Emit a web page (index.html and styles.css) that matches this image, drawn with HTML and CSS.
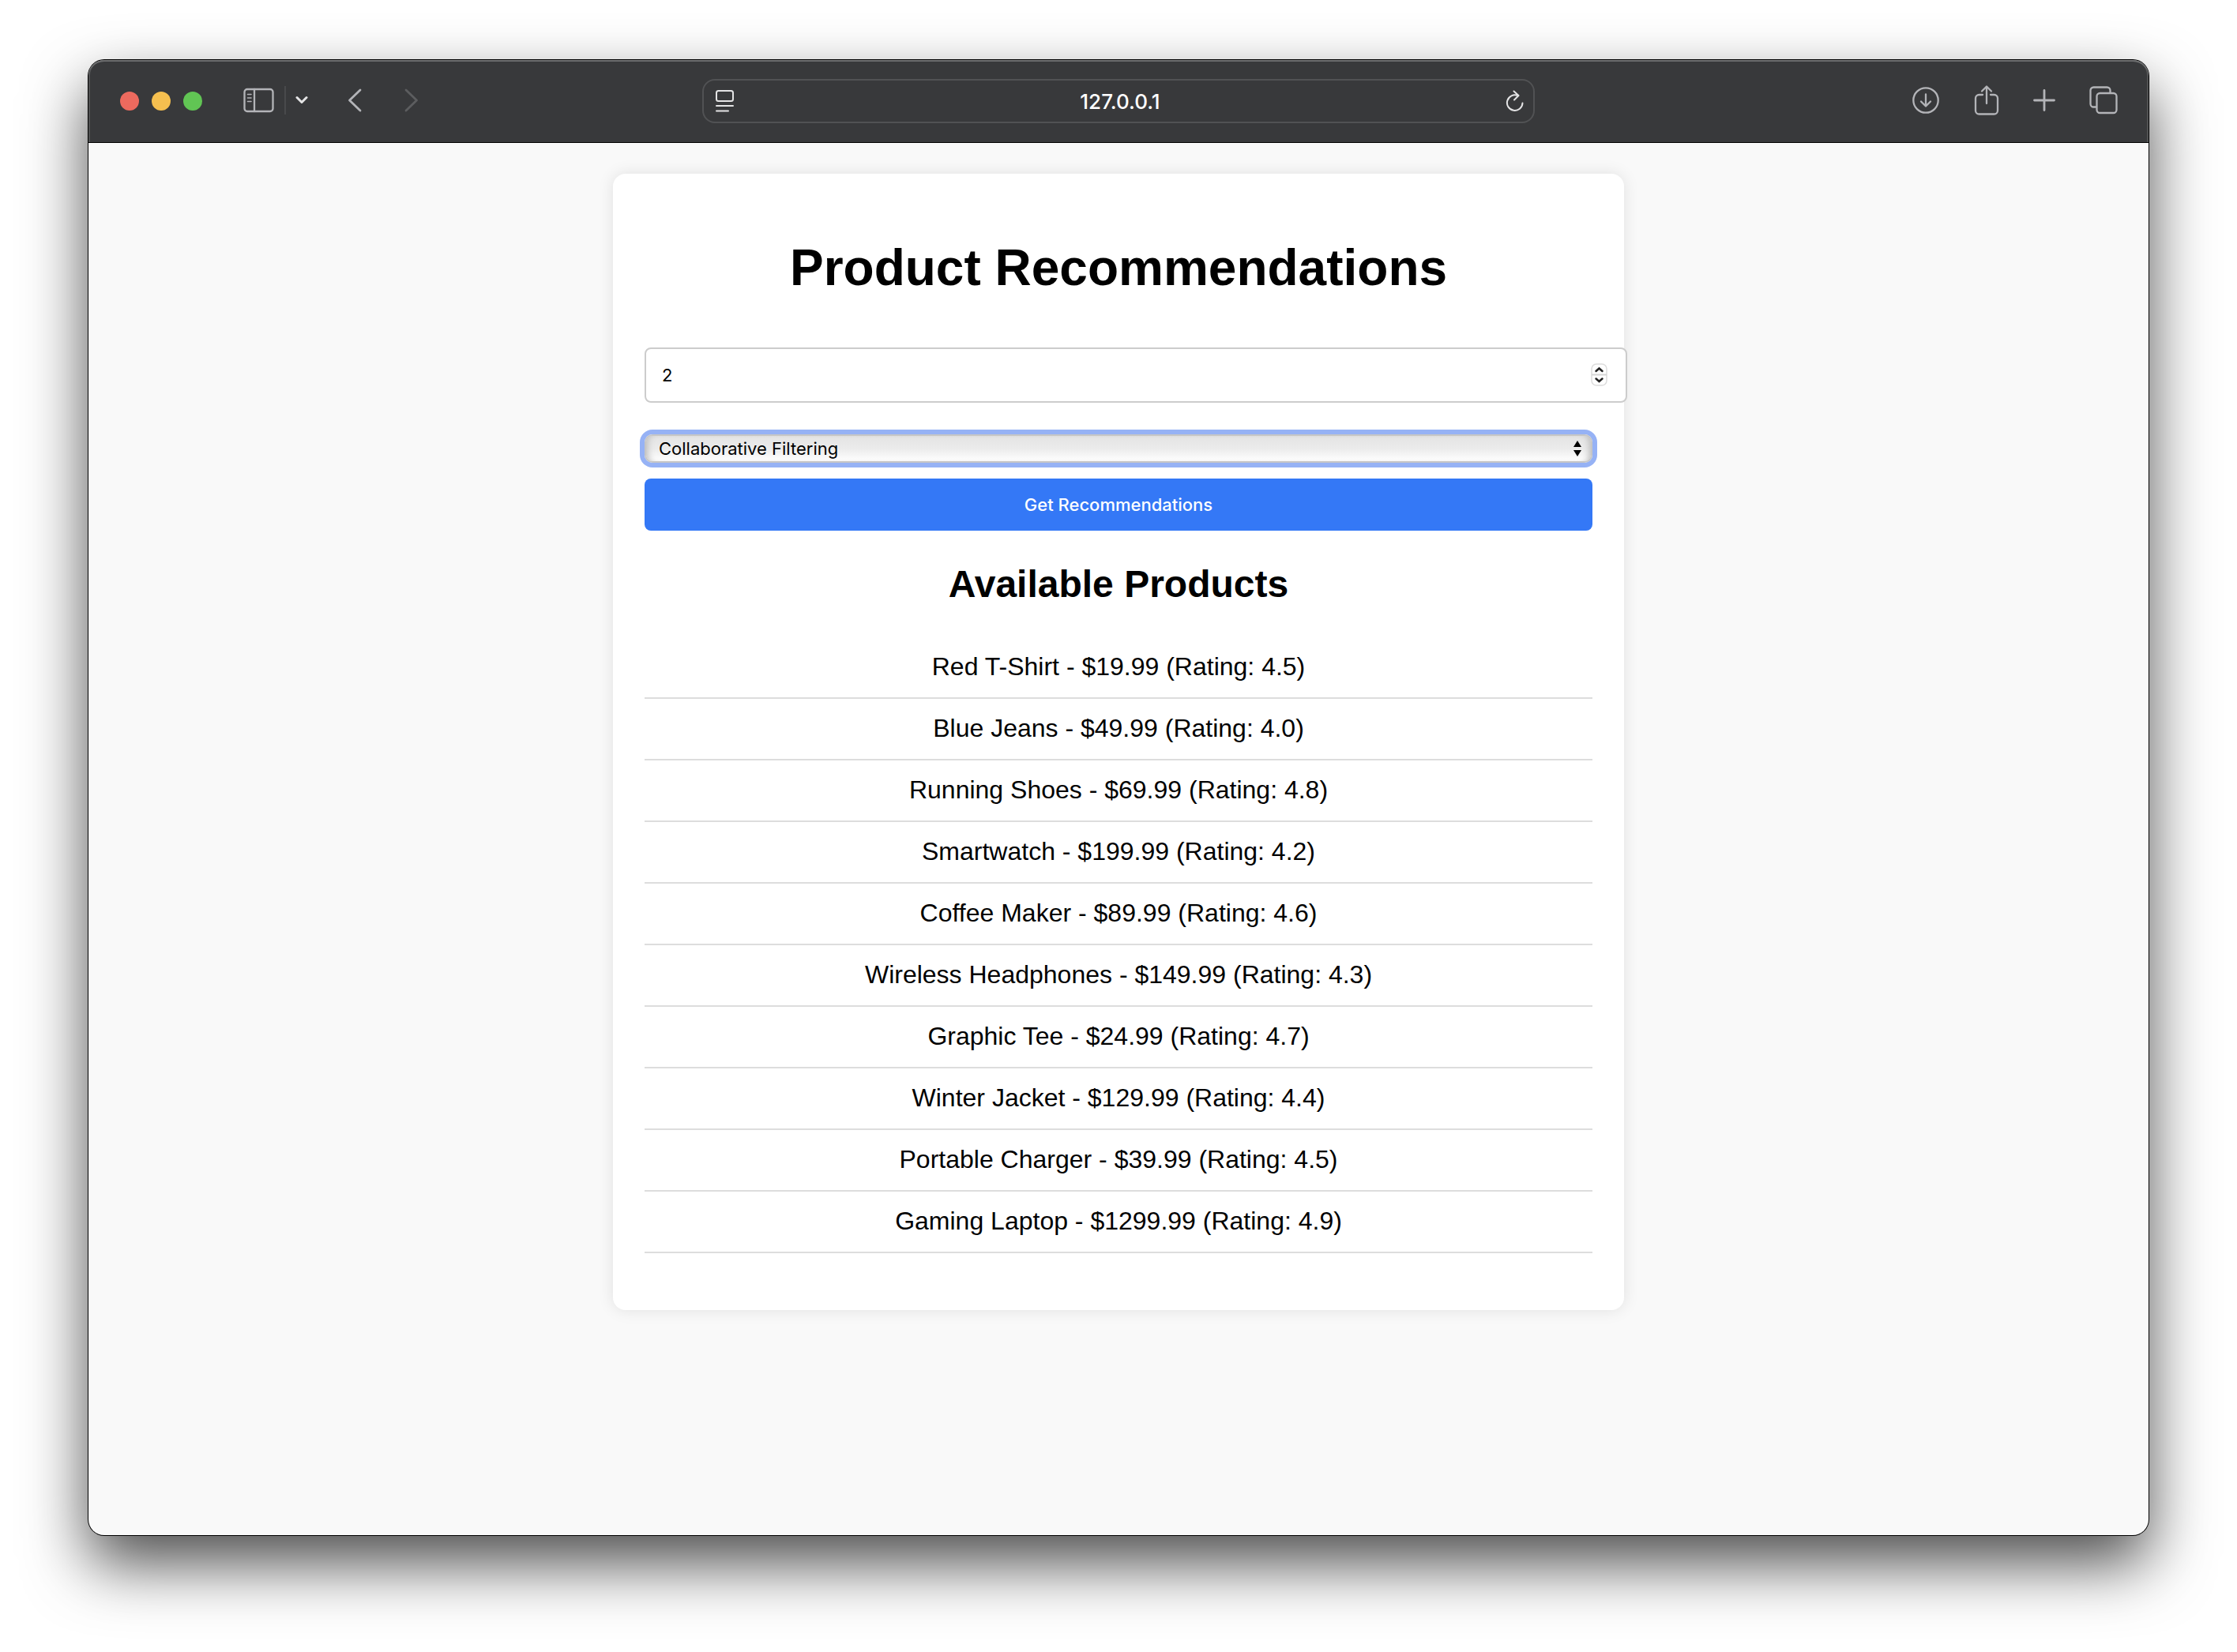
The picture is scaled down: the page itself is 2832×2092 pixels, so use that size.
FILE: index.html
```html
<!DOCTYPE html>
<html lang="en">
<head>
<meta charset="utf-8">
<title>Product Recommendations</title>
<link rel="stylesheet" href="styles.css">
</head>
<body>
<div class="window">
  <header class="toolbar">
    <div class="toolbar-side">
      <div class="lights"><span class="light close"></span><span class="light minimize"></span><span class="light zoom"></span></div>
      <div class="sidebar-group">
        <button class="tool" type="button" aria-label="Show sidebar">
          <svg width="40" height="32" viewBox="0 0 40 32"><rect x="1.5" y="2" width="36" height="28" rx="3.5"/><path d="M14 2v28"/><path class="thin" d="M5.5 8.500h4.500M5.500 13h4.500M5.500 17.500h4.500"/></svg>
        </button>
        <span class="divider"></span>
        <button class="tool bright" type="button" aria-label="Tab groups">
          <svg width="16" height="12" viewBox="0 0 16 12"><path class="thick" d="M2 2.500L8 8.500L14 2.500"/></svg>
        </button>
      </div>
      <div class="history">
        <button class="tool" type="button" aria-label="Back"><svg width="18" height="30" viewBox="0 0 18 30"><path class="medium" d="M16 2L2.500 15L16 28"/></svg></button>
        <button class="tool dim" type="button" aria-label="Forward"><svg width="18" height="30" viewBox="0 0 18 30"><path class="medium" d="M2 2L15.500 15L2 28"/></svg></button>
      </div>
    </div>
    <div class="address">
      <button class="tool bright" type="button" aria-label="Page menu"><svg width="24" height="28" viewBox="0 0 24 28"><rect x="1" y="1" width="21" height="13" rx="2.500"/><path d="M1 20h21M1 26.500h15"/></svg></button>
      <span class="url">127.0.0.1</span>
      <button class="tool bright" type="button" aria-label="Reload"><svg width="24" height="28" viewBox="0 0 24 28"><path d="M21.500 16.500A9.800 9.800 0 1 1 15.500 7.100M10.500 1.500L16.500 7L11 12.500"/></svg></button>
    </div>
    <div class="toolbar-side actions">
      <button class="tool" type="button" aria-label="Downloads"><svg width="36" height="36" viewBox="0 0 36 36"><circle cx="18" cy="18" r="15.700"/><path d="M18 10.500v14.500M12 19.500l6 6l6-6"/></svg></button>
      <button class="tool" type="button" aria-label="Share"><svg width="32" height="40" viewBox="0 0 32 40"><path d="M11 13H6.500A4.500 4.500 0 0 0 2 17.500V33a4.500 4.500 0 0 0 4.500 4.500h19A4.500 4.500 0 0 0 30 33V17.500A4.500 4.500 0 0 0 25.500 13H21M16 24V3M10 8.500l6-6l6 6"/></svg></button>
      <button class="tool" type="button" aria-label="New tab"><svg width="28" height="28" viewBox="0 0 28 28"><path class="medium" d="M14 1.500v25M1.500 14h25"/></svg></button>
      <button class="tool" type="button" aria-label="Tab overview"><svg width="36" height="36" viewBox="0 0 36 36"><path d="M8.500 26.500H5.500A4 4 0 0 1 1.500 22.500V5.500A4 4 0 0 1 5.500 1.500H22.500A4 4 0 0 1 26.500 5.500V8.500"/><rect x="9.500" y="9" width="25" height="25" rx="4"/></svg></button>
    </div>
  </header>
  <main class="page">
    <div class="container">
      <h1>Product Recommendations</h1>
      <form class="form">
        <div class="field number-field">
          <input class="number" type="number" value="2" aria-label="User ID">
          <svg class="stepper" width="24" height="32" viewBox="0 0 24 32" aria-hidden="true"><rect class="stepper-box" x="2" y="2" width="19" height="27" rx="6"/><path class="stepper-line" d="M2 15.500h19"/><path class="stepper-arrow" d="M7.500 11L11.500 7.500L15.500 11M7.500 20.500L11.500 24L15.500 20.500"/></svg>
        </div>
        <div class="field select-field">
          <select class="method" aria-label="Recommendation method"><option>Collaborative Filtering</option><option>Content-Based Filtering</option></select>
          <svg class="arrows" width="10" height="20" viewBox="0 0 10 20" aria-hidden="true"><path d="M5 0L10 8H0ZM5 20L10 12H0Z"/></svg>
        </div>
        <button class="submit" type="button">Get Recommendations</button>
      </form>
      <h2>Available Products</h2>
      <ul class="products">
        <li>Red T-Shirt - $19.99 (Rating: 4.5)</li>
        <li>Blue Jeans - $49.99 (Rating: 4.0)</li>
        <li>Running Shoes - $69.99 (Rating: 4.8)</li>
        <li>Smartwatch - $199.99 (Rating: 4.2)</li>
        <li>Coffee Maker - $89.99 (Rating: 4.6)</li>
        <li>Wireless Headphones - $149.99 (Rating: 4.3)</li>
        <li>Graphic Tee - $24.99 (Rating: 4.7)</li>
        <li>Winter Jacket - $129.99 (Rating: 4.4)</li>
        <li>Portable Charger - $39.99 (Rating: 4.5)</li>
        <li>Gaming Laptop - $1299.99 (Rating: 4.9)</li>
      </ul>
    </div>
  </main>
</div>
</body>
</html>
```
FILE: styles.css
```css
* { box-sizing: border-box; }

body {
  margin: 0;
  padding: 76px 112px 148px;
  background: #fff;
  color: #000;
  font-family: "Liberation Sans", Arial, sans-serif;
  font-size: 32px;
}

button, input, select {
  margin: 0;
  font-family: Inter, sans-serif;
  font-size: 22px;
  color: #000;
}

.window {
  display: flex;
  flex-direction: column;
  min-height: calc(100vh - 224px);
  border-radius: 20px;
  background: #f9f9f9;
  box-shadow: 0 0 0 1px #000, 0 36px 80px rgba(0, 0, 0, 0.7);
}

/* Browser toolbar */
.toolbar {
  display: flex;
  align-items: center;
  height: 105px;
  border-bottom: 1px solid #000;
  border-radius: 20px 20px 0 0;
  background: #38393b;
  box-shadow: inset 0 2px 0 #6e6f70, inset 2px 0 0 #515253, inset -2px 0 0 #515253;
}

.toolbar-side {
  display: flex;
  flex: 1 1 0;
  align-items: center;
  padding: 0 39px 2px 40px;
}

.lights { display: flex; gap: 16px; padding-top: 2px; }

.light {
  width: 24px;
  height: 24px;
  border-radius: 50%;
}

.close { background: #ed6a5e; }
.minimize { background: #f5bf4f; }
.zoom { background: #61c554; }

.tool {
  display: flex;
  padding: 0;
  border: 0;
  background: none;
  color: #b3b4b8;
}

.bright { color: #e4e4e5; }
.dim { color: #5c5d5f; }

.tool svg {
  fill: none;
  stroke: currentColor;
  stroke-width: 2;
  stroke-linecap: round;
  stroke-linejoin: round;
}

.toolbar-side .tool svg { stroke-width: 2.3; }
.tool svg .thin { stroke-width: 1.6; }
.tool svg .medium { stroke-width: 2.8; }
.tool svg .thick { stroke-width: 3; }

.sidebar-group {
  display: flex;
  align-items: center;
  gap: 12px;
  margin-left: 52px;
}

.divider {
  width: 2px;
  height: 36px;
  background: #48494b;
}

.history {
  display: flex;
  gap: 54px;
  margin-left: 50px;
}

.address {
  display: flex;
  flex: 0 1 1054px;
  align-items: center;
  justify-content: space-between;
  height: 56px;
  padding: 0 11px 0 15px;
  border: 2px solid #515254;
  border-radius: 16px;
}

.url {
  color: #fff;
  font-family: Inter, sans-serif;
  font-size: 26px;
  font-weight: 500;
}

.actions {
  justify-content: flex-end;
  gap: 43px;
}

/* Page */
.page { padding: 39px 40px; }

.container {
  max-width: 1280px;
  margin: 0 auto;
  padding: 40px 40px 72px;
  border-radius: 16px;
  background: #fff;
  box-shadow: 0 0 20px rgba(0, 0, 0, 0.1);
  text-align: center;
}

h1 {
  margin: 0;
  padding: 42px 0 64px;
  font-size: 64px;
  line-height: 74px;
}

h2 {
  margin: 40px 0;
  font-size: 48px;
  line-height: 55px;
}

.field { position: relative; }

.number-field { margin-right: -44px; }

.number {
  display: block;
  width: 100%;
  height: 70px;
  padding: 0 20px;
  border: 2px solid #ccc;
  border-radius: 8px;
  background: #fff;
  appearance: textfield;
}

.number::-webkit-inner-spin-button { appearance: none; }

.stepper {
  position: absolute;
  top: 19px;
  right: 23px;
}

.stepper-box { fill: #fff; stroke: #dcdcdc; stroke-width: 1.5; }
.stepper-line { stroke: #d4d4d4; stroke-width: 2; }

.stepper-arrow {
  fill: none;
  stroke: #222;
  stroke-width: 2.5;
  stroke-linecap: round;
}

.select-field { margin: 40px 0 20px; }

.method {
  display: block;
  width: 100%;
  height: 36px;
  padding: 0 16px;
  border: 2px solid #c6c6c6;
  border-radius: 10px;
  outline: 0;
  background: linear-gradient(#e4e4e4, #ebebeb 50%, #fff);
  box-shadow: 0 0 0 6px #96b2f5, inset 8px 0 8px -6px #bbb, inset -8px 0 8px -6px #bbb;
  appearance: none;
}

.arrows {
  position: absolute;
  top: 8px;
  right: 14px;
  pointer-events: none;
}

.submit {
  display: block;
  width: 100%;
  height: 66px;
  padding: 0;
  border: 0;
  border-radius: 8px;
  background: #3478f6;
  color: #fff;
  font-weight: 500;
}

.products {
  margin: 0;
  padding: 0;
  list-style: none;
}

.products li {
  padding: 19px 20px 21px;
  border-bottom: 2px solid #ddd;
  line-height: 36px;
}
```
